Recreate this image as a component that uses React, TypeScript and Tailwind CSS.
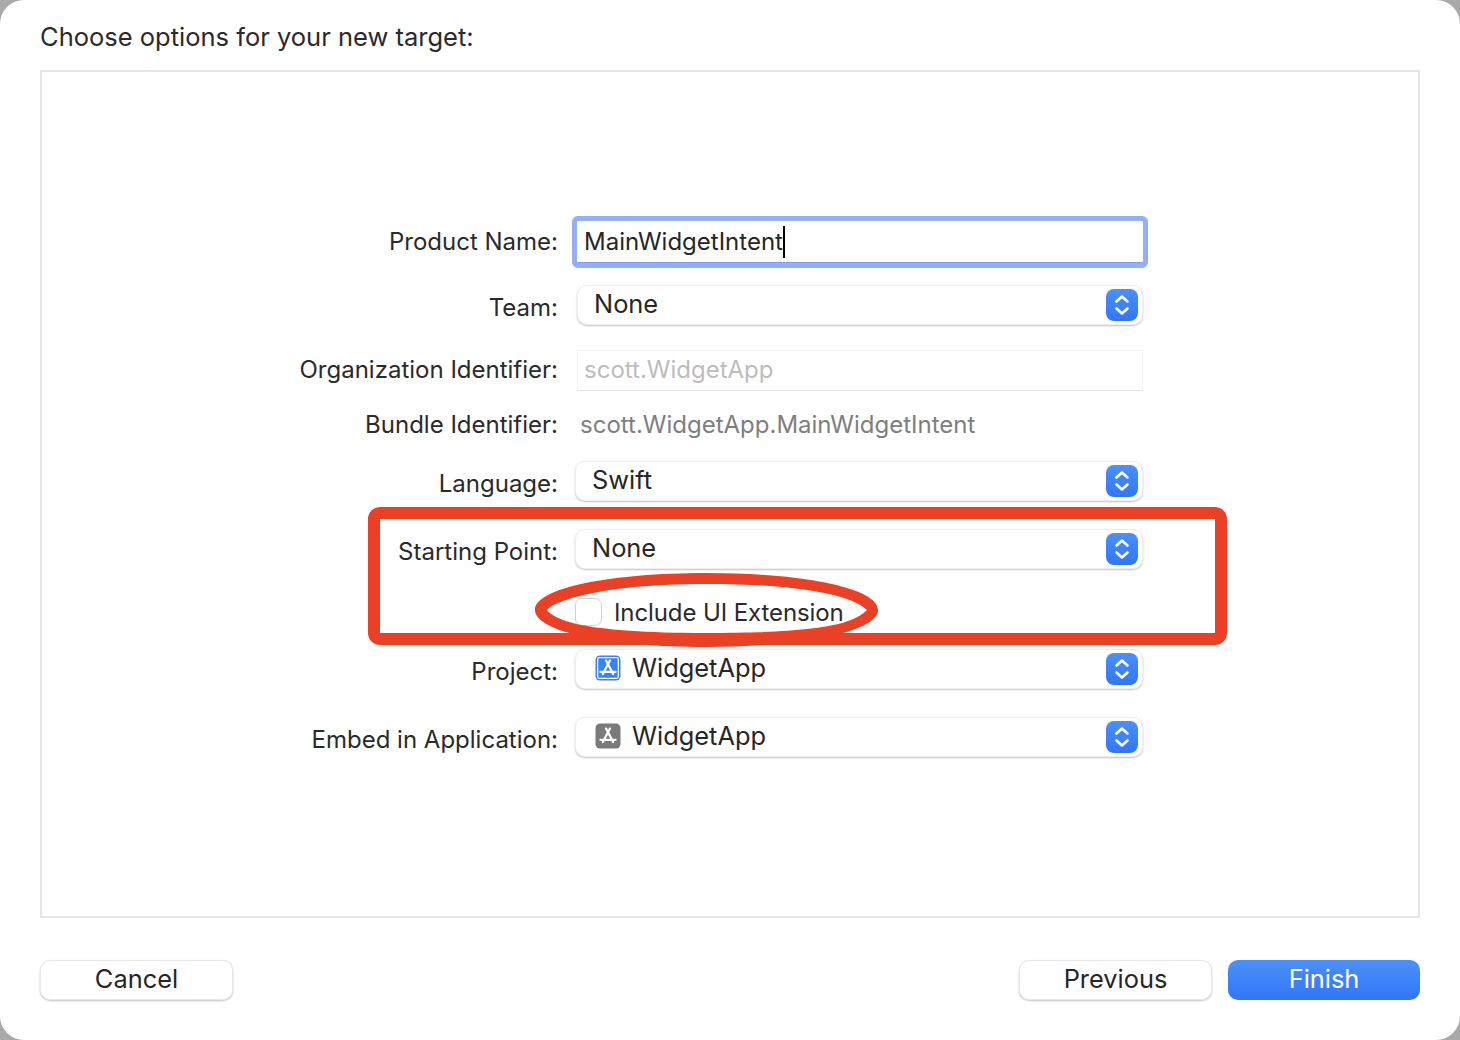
const font = "font-['Inter',sans-serif]";

function AppIcon({ color, outline }: { color: string; outline?: boolean }) {
  return (
    <svg width="26" height="26" viewBox="0 0 26 26" className="shrink-0">
      <rect x="0.5" y="0.5" width="25" height="25" rx="4.5" fill={color} />
      {outline && <rect x="2.7" y="2.7" width="20.6" height="20.6" rx="1.5" fill="none" stroke="#fff" strokeWidth="1.2" />}
      <g stroke="#fff" strokeWidth="2.2" strokeLinecap="round" fill="none">
        <path d="M15 5.4 7.8 19" />
        <path d="M11 5.4 18.2 19" />
        <path d="M5.4 16.8H20.6" />
      </g>
    </svg>
  );
}

function Stepper() {
  return (
    <div className="flex h-[32px] w-[32px] items-center justify-center rounded-[8px] bg-gradient-to-b from-[#4b90f8] to-[#3276f6]">
      <svg width="20" height="26" viewBox="0 0 20 26" fill="none" stroke="#fff" strokeWidth="2.6" strokeLinecap="round" strokeLinejoin="round">
        <path d="M4.5 9.5 10 4.5l5.5 5" />
        <path d="M4.5 16.5 10 21.5l5.5-5" />
      </svg>
    </div>
  );
}

function Label({ text, offset = "pt-[4px]" }: { text: string; offset?: string }) {
  return (
    <div className={`w-[516px] shrink-0 text-right text-[24px] leading-[30px] text-[#2a2a2a] ${offset}`}>
      {text}
    </div>
  );
}

function Select({ value, icon, left = "ml-[17px]", width = "w-[568px]", textLeft = "pl-[16px]" }: {
  value: string;
  icon?: React.ReactNode;
  left?: string;
  width?: string;
  textLeft?: string;
}) {
  return (
    <div className={`${left} ${width} flex h-[40px] items-center justify-between rounded-[10px] border border-[#eeeeee] bg-white pr-[4px] shadow-[0_1px_2px_rgba(0,0,0,0.24)] ${textLeft}`}>
      <div className="flex items-center gap-[11px] pb-[3px] text-[25.4px] leading-[34px] text-[#262626]">
        {icon}
        <span>{value}</span>
      </div>
      <Stepper />
    </div>
  );
}

function Button({ label, primary }: { label: string; primary?: boolean }) {
  return (
    <button
      className={
        primary
          ? "h-[40px] w-[192px] rounded-[10px] bg-gradient-to-b from-[#4b90f8] to-[#3276f6] pb-[2px] text-[25.4px] leading-[36px] text-white"
          : "h-[40px] w-[193px] rounded-[10px] border border-[#e8e8e8] bg-white pb-[2px] text-[25.4px] leading-[34px] text-[#262626] shadow-[0_1px_2px_rgba(0,0,0,0.24)]"
      }
    >
      {label}
    </button>
  );
}

export default function App() {
  return (
    <div className={`relative h-[1040px] w-[1460px] overflow-hidden bg-[#a9a9a9] ${font}`}>
      <div className="flex h-full flex-col rounded-[24px] bg-white px-[40px]">
        <h1 className="h-[70px] pt-[20px] text-[25.5px] font-normal leading-[34px] text-[#2a2a2a]">
          Choose options for your new target:
        </h1>

        <div className="h-[848px] border-2 border-[#e5e5e5] pt-[144px]">
          <div className="flex h-[52px]">
            <Label text="Product Name:" offset="pt-[11px]" />
            <div className="ml-[14px] flex h-[52px] w-[576px] items-center rounded-[6px] border-[5px] border-[#93aff5] bg-white pl-[7px] shadow-[inset_0_-1px_0_#7f9bea]">
              <span className="text-[24px] leading-[34px] text-[#262626]">MainWidgetIntent</span>
              <span className="h-[32px] w-[2px] bg-black" />
            </div>
          </div>

          <div className="mt-[17px] flex h-[40px]">
            <Label text="Team:" offset="pt-[8px]" />
            <Select value="None" left="ml-[19px]" width="w-[566px]" />
          </div>

          <div className="mt-[25px] flex h-[42px]">
            <Label text="Organization Identifier:" offset="pt-[5px]" />
            <div className="ml-[19px] flex h-[41px] w-[566px] items-center border border-[#f4f4f4] border-b-[#e4e4e4] pb-[2px] pl-[6px] text-[24px] leading-[30px] text-[#bdbdbd]">
              scott.WidgetApp
            </div>
          </div>

          <div className="mt-[15px] flex h-[36px] items-center">
            <Label text="Bundle Identifier:" offset="" />
            <div className="ml-[22px] text-[24px] leading-[30px] text-[#7e7e7e]">
              scott.WidgetApp.MainWidgetIntent
            </div>
          </div>

          <div className="mt-[18px] flex h-[40px]">
            <Label text="Language:" offset="pt-[8px]" />
            <Select value="Swift" />
          </div>

          <div className="mt-[28px] flex h-[40px]">
            <Label text="Starting Point:" offset="pt-[8px]" />
            <Select value="None" />
          </div>

          <div className="mt-[29px] ml-[533px] flex h-[28px] items-center gap-[12px]">
            <div className="h-[28px] w-[27px] rounded-[7px] border border-[#d2d2d2] bg-white" />
            <span className="pt-[2px] text-[24px] leading-[30px] tracking-[-0.1px] text-[#2a2a2a]">Include UI Extension</span>
          </div>

          <div className="mt-[23px] flex h-[40px]">
            <Label text="Project:" offset="pt-[8px]" />
            <Select value="WidgetApp" textLeft="pl-[19px]" icon={<AppIcon color="#3b82f6" outline />} />
          </div>

          <div className="mt-[28px] flex h-[40px]">
            <Label text="Embed in Application:" offset="pt-[8px]" />
            <Select value="WidgetApp" textLeft="pl-[19px]" icon={<AppIcon color="#7a7a7a" />} />
          </div>
        </div>

        <div className="mt-[42px] flex items-start justify-between">
          <Button label="Cancel" />
          <div className="flex gap-[16px]">
            <Button label="Previous" />
            <Button label="Finish" primary />
          </div>
        </div>
      </div>

      {/* annotation drawn on top of the screenshot */}
      <div className="absolute left-[368px] top-[507px] h-[138px] w-[859px] rounded-[12px] border-[12px] border-[#ea4025]" />
      <svg className="absolute left-[530px] top-[568px]" width="354" height="84" viewBox="0 0 354 84">
        <path
          fillRule="evenodd"
          fill="#ea4025"
          d="M5 42C5 20 80 5 176 5s172 15 172 37-76 37-172 37S5 64 5 42ZM17 42C25 33 70 16 176 16S325 30 337 42C325 54 300 65 176 65S25 52 17 42Z"
        />
      </svg>
    </div>
  );
}
